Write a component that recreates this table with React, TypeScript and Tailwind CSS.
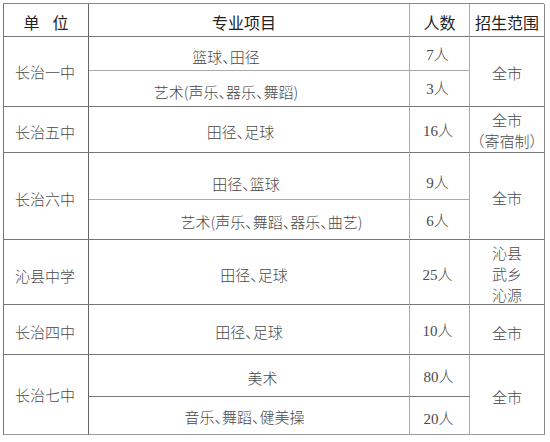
import React from 'react';

const cjk = "font-['Noto_Sans_CJK_SC',sans-serif] [font-feature-settings:'halt']";
const num = "font-['Liberation_Serif','Noto_Sans_CJK_SC',serif]";

// shared cell look
const cell = 'flex items-center justify-center border-r border-b text-[15px] leading-none';

export default function App() {
    return (
        <div className="w-[550px] h-[442px] bg-white pt-[3px] pl-[3px]">
            <div
                className={`grid w-[541px] grid-cols-[85px_321px_60px_75px] grid-rows-[33px_34px_36px_46px_47px_40px_65px_50px_42px_38px] border-l border-t border-l-[#777] border-t-[#888] text-[#4a4a4a] font-light ${cjk}`}
            >
                {/* header */}
                <div className={`${cell} col-start-1 row-start-1 border-r-[#666] border-b-[#777] pt-[3px] text-[16px] font-normal text-[#222]`}>
                    单<span className="w-[13px]" />位
                </div>
                <div className={`${cell} col-start-2 row-start-1 border-r-[#aaa] border-b-[#777] pt-[3px] pr-[10px] text-[16px] font-normal text-[#222]`}>
                    专业项目
                </div>
                <div className={`${cell} col-start-3 row-start-1 border-r-[#aaa] border-b-[#777] pt-[3px] text-[16px] font-normal text-[#222]`}>
                    人数
                </div>
                <div className={`${cell} col-start-4 row-start-1 border-r-[#888] border-b-[#777] pt-[3px] text-[16px] font-normal text-[#222]`}>
                    招生范围
                </div>

                {/* 长治一中 */}
                <div className={`${cell} col-start-1 row-start-2 row-span-2 border-r-[#666] border-b-[#777] pr-[2px]`}>长治一中</div>
                <div className={`${cell} col-start-2 row-start-2 border-r-[#aaa] border-b-[#aaa] pt-[6px] pr-[46px]`}>篮球、田径</div>
                <div className={`${cell} ${num} col-start-3 row-start-2 border-r-[#aaa] border-b-[#aaa] pt-[4px] pr-[4px]`}>7人</div>
                <div className={`${cell} col-start-2 row-start-3 border-r-[#aaa] border-b-[#777] pt-[6px] pr-[46px]`}>艺术(声乐、器乐、舞蹈)</div>
                <div className={`${cell} ${num} col-start-3 row-start-3 border-r-[#aaa] border-b-[#777] pt-[2px] pr-[4px]`}>3人</div>
                <div className={`${cell} col-start-4 row-start-2 row-span-2 border-r-[#888] border-b-[#777] pt-[2px]`}>全市</div>

                {/* 长治五中 */}
                <div className={`${cell} col-start-1 row-start-4 border-r-[#666] border-b-[#777] pt-[4px] pr-[2px]`}>长治五中</div>
                <div className={`${cell} col-start-2 row-start-4 border-r-[#aaa] border-b-[#777] pt-[4px] pr-[17px]`}>田径、足球</div>
                <div className={`${cell} ${num} col-start-3 row-start-4 border-r-[#aaa] border-b-[#777] pt-[4px] pr-[3px]`}>16人</div>
                <div className={`${cell} col-start-4 row-start-4 border-r-[#888] border-b-[#777] flex-col text-[14px]`}>
                    <div className="leading-[21px]">全市</div>
                    <div className="leading-[21px]">（寄宿制）</div>
                </div>

                {/* 长治六中 */}
                <div className={`${cell} col-start-1 row-start-5 row-span-2 border-r-[#666] border-b-[#777] pt-[4px] pr-[2px]`}>长治六中</div>
                <div className={`${cell} col-start-2 row-start-5 border-r-[#aaa] border-b-[#aaa] pt-[14px] pr-[6px]`}>田径、篮球</div>
                <div className={`${cell} ${num} col-start-3 row-start-5 border-r-[#aaa] border-b-[#aaa] pt-[14px] pr-[4px]`}>9人</div>
                <div className={`${cell} col-start-2 row-start-6 border-r-[#aaa] border-b-[#777] pt-[4px] pl-[45px]`}>艺术(声乐、舞蹈、器乐、曲艺)</div>
                <div className={`${cell} ${num} col-start-3 row-start-6 border-r-[#aaa] border-b-[#777] pt-[4px] pr-[4px]`}>6人</div>
                <div className={`${cell} col-start-4 row-start-5 row-span-2 border-r-[#888] border-b-[#777] pt-[2px]`}>全市</div>

                {/* 沁县中学 */}
                <div className={`${cell} col-start-1 row-start-7 border-r-[#666] border-b-[#777] pt-[6px] pr-[2px]`}>沁县中学</div>
                <div className={`${cell} col-start-2 row-start-7 border-r-[#aaa] border-b-[#777] pt-[4px] pl-[10px]`}>田径、足球</div>
                <div className={`${cell} ${num} col-start-3 row-start-7 border-r-[#aaa] border-b-[#777] pt-[6px] pr-[4px]`}>25人</div>
                <div className={`${cell} col-start-4 row-start-7 border-r-[#888] border-b-[#777] flex-col pt-[2px]`}>
                    <div className="leading-[21px]">沁县</div>
                    <div className="leading-[21px]">武乡</div>
                    <div className="leading-[21px]">沁源</div>
                </div>

                {/* 长治四中 */}
                <div className={`${cell} col-start-1 row-start-8 border-r-[#666] border-b-[#777] pt-[4px] pr-[2px]`}>长治四中</div>
                <div className={`${cell} col-start-2 row-start-8 border-r-[#aaa] border-b-[#777] pt-[4px]`}>田径、足球</div>
                <div className={`${cell} ${num} col-start-3 row-start-8 border-r-[#aaa] border-b-[#777] pt-[4px] pr-[4px]`}>10人</div>
                <div className={`${cell} col-start-4 row-start-8 border-r-[#888] border-b-[#777] pt-[6px]`}>全市</div>

                {/* 长治七中 */}
                <div className={`${cell} col-start-1 row-start-9 row-span-2 border-r-[#666] border-b-[#999] pr-[2px]`}>长治七中</div>
                <div className={`${cell} col-start-2 row-start-9 border-r-[#aaa] border-b-[#777] pt-[4px] pl-[27px]`}>美术</div>
                <div className={`${cell} ${num} col-start-3 row-start-9 border-r-[#aaa] border-b-[#777] pt-[4px] pr-[2px]`}>80人</div>
                <div className={`${cell} col-start-2 row-start-10 border-r-[#aaa] border-b-[#999] pt-[2px] pr-[9px]`}>音乐、舞蹈、健美操</div>
                <div className={`${cell} ${num} col-start-3 row-start-10 border-r-[#aaa] border-b-[#999] pt-[8px] pr-[2px]`}>20人</div>
                <div className={`${cell} col-start-4 row-start-9 row-span-2 border-r-[#888] border-b-[#999] pt-[4px]`}>全市</div>
            </div>
        </div>
    );
}
